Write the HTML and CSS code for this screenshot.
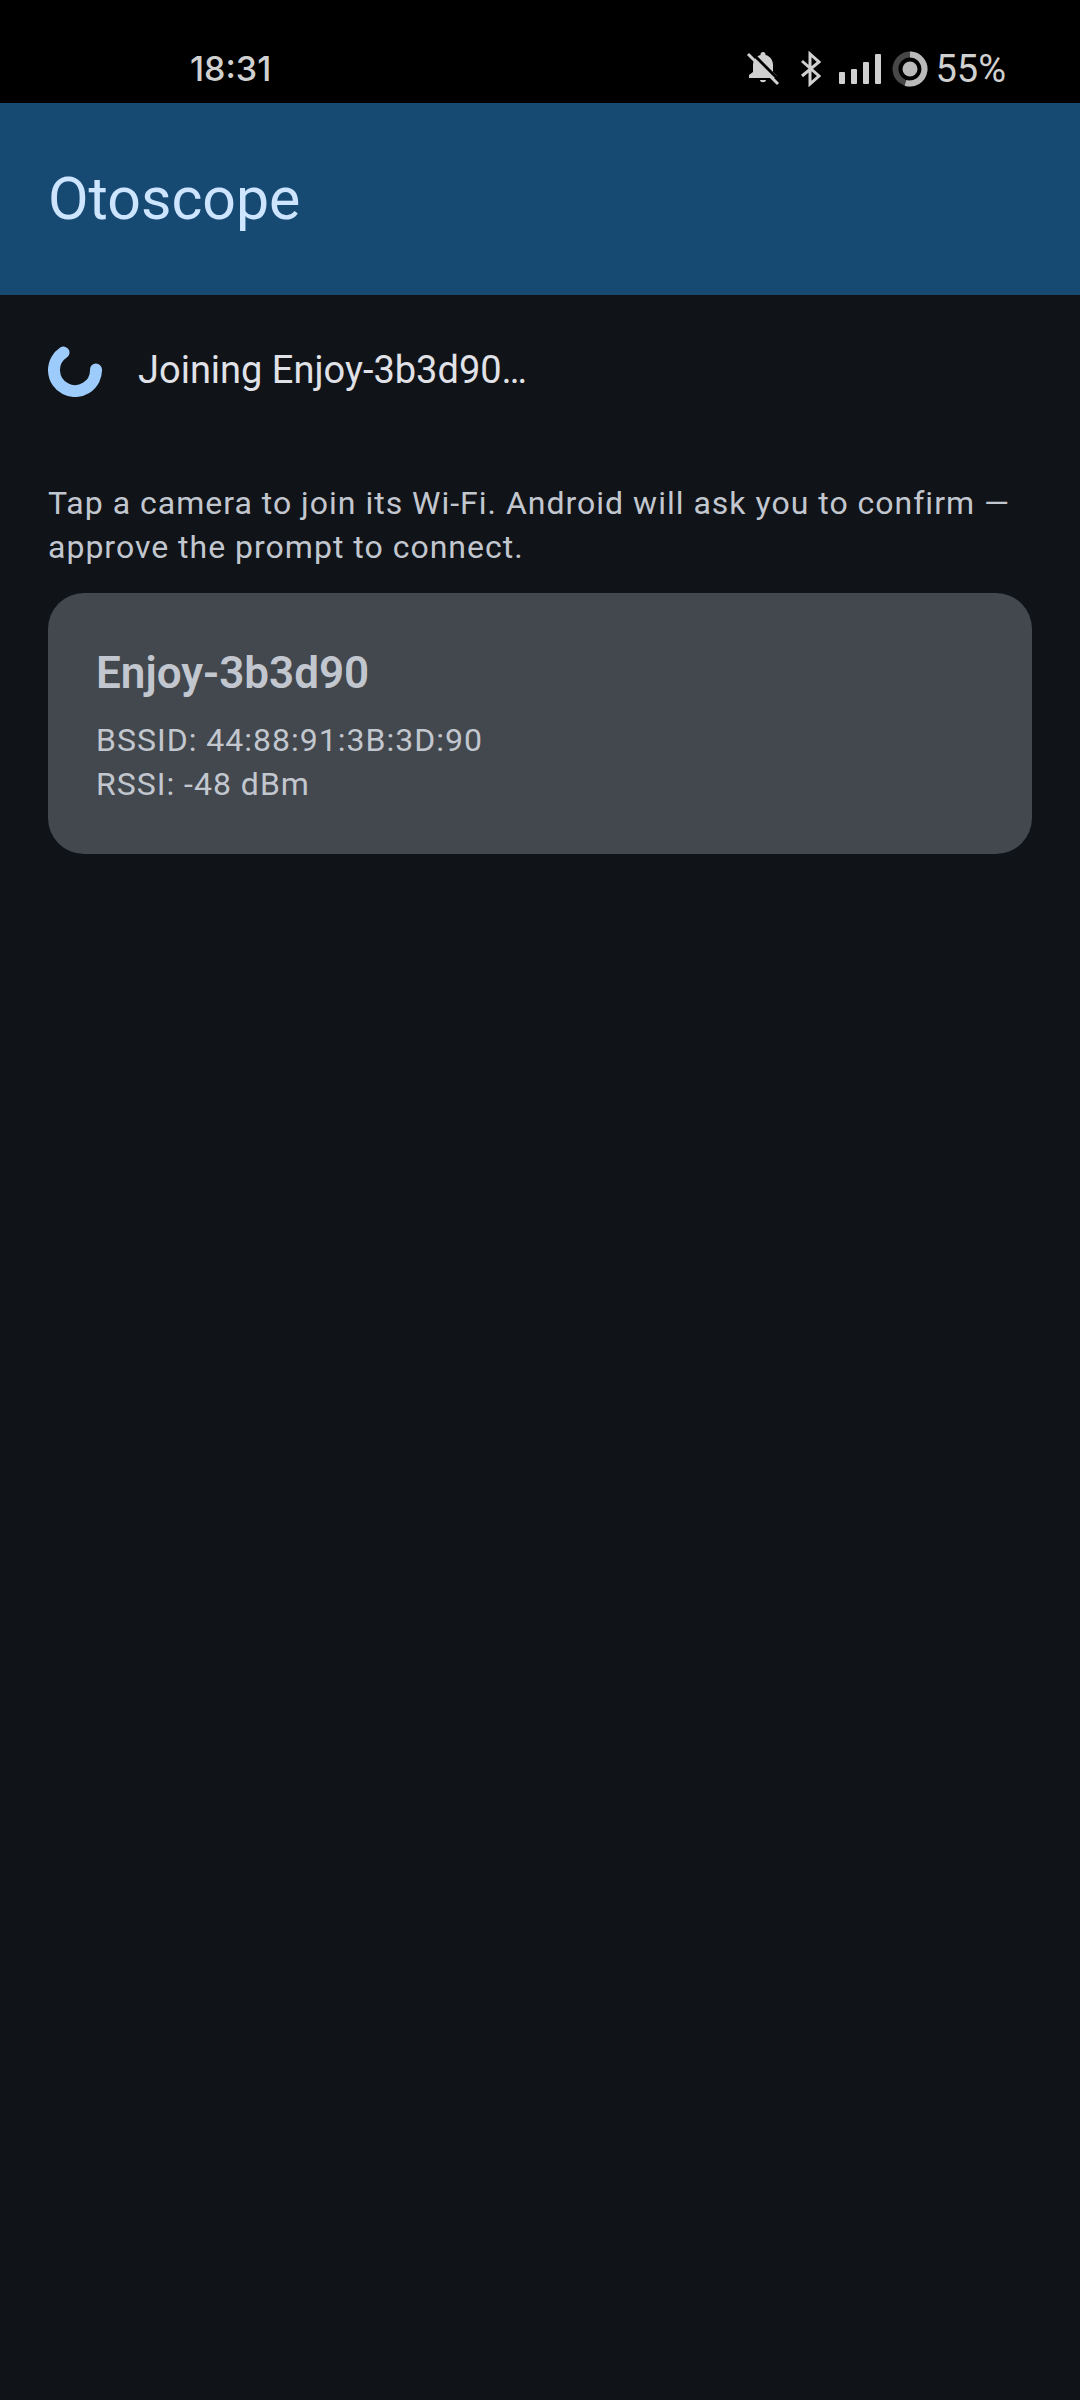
FILE: index.html
```html
<!DOCTYPE html>
<html lang="en">
<head>
  <meta charset="utf-8">
  <meta name="viewport" content="width=device-width, initial-scale=1">
  <title>Otoscope</title>
  <link rel="stylesheet" href="styles.css">
</head>
<body>
  <div class="status-bar">
    <time class="clock">18:31</time>
    <div class="status-icons">
      <svg class="bell" width="34" height="36" viewBox="0 0 34 36" role="img" aria-label="Muted">
        <path fill="#d0d0d0" d="M14.500 3.500a2.500 2.500 0 0 1 5 0v.5c5 1.200 7.500 5.500 7.500 10v7l4 4v2H3v-3l4-3v-7c0-2.500.8-5 2.500-7 1.300-1.500 3-2.500 5-3zM14 29h6c0 3-6 3-6 0z"/>
        <path stroke="#000" stroke-width="3" d="M5 1l30 30"/>
        <path stroke="#d0d0d0" stroke-width="3" d="M2 3l30 30"/>
      </svg>
      <svg class="bluetooth" width="22" height="36" viewBox="0 0 22 36" role="img" aria-label="Bluetooth">
        <path fill="none" stroke="#d0d0d0" stroke-width="3" d="M2 10l17 15-9 8V3l9 8L2 25"/>
      </svg>
      <svg class="signal" width="44" height="36" viewBox="0 0 44 36" role="img" aria-label="Signal">
        <g fill="#d0d0d0">
          <rect x="0" y="21" width="6" height="12" rx="1"/>
          <rect x="12" y="18" width="6" height="15" rx="1"/>
          <rect x="24" y="11" width="6" height="22" rx="1"/>
          <rect x="36" y="3" width="6" height="30" rx="1"/>
        </g>
      </svg>
      <svg class="battery" width="36" height="36" viewBox="0 0 36 36" role="img" aria-label="Battery">
        <circle cx="18" cy="18" r="14.500" fill="none" stroke="#474747" stroke-width="6"/>
        <path fill="none" stroke="#bababa" stroke-width="6" d="M18 3.500a14.500 14.500 0 1 1-4.500 28.300"/>
        <circle cx="18" cy="18" r="7.500" fill="#bababa"/>
      </svg>
      <span class="percent">55%</span>
    </div>
  </div>

  <header class="app-bar">
    <h1 class="app-title">Otoscope</h1>
  </header>

  <main class="content">
    <div class="progress" role="status">
      <svg width="54" height="54" viewBox="0 0 54 54" aria-hidden="true">
        <path fill="none" stroke="#9dcbfb" stroke-width="12" stroke-linecap="round" d="M15.500 9.500A21 21 0 1 0 48 26.500"/>
      </svg>
      <span>Joining Enjoy-3b3d90…</span>
    </div>
    <p class="hint">Tap a camera to join its Wi-Fi. Android will ask you to confirm — approve the prompt to connect.</p>
    <button class="camera" type="button">
      <span class="camera-name">Enjoy-3b3d90</span>
      <span class="camera-detail">BSSID: 44:88:91:3B:3D:90</span>
      <span class="camera-detail">RSSI: -48 dBm</span>
    </button>
  </main>
</body>
</html>
```
FILE: styles.css
```css
* {
  box-sizing: border-box;
}

body {
  margin: 0;
  min-height: 100vh;
  background: #101318;
  color: #e0e2e8;
  font-family: Roboto, "Noto Sans", sans-serif;
}

.status-bar {
  display: flex;
  align-items: flex-end;
  justify-content: space-between;
  height: 103px;
  padding: 0 74px 16px 190px;
  background: #000;
  color: #d0d0d0;
}

.clock {
  font-family: Inter, sans-serif;
  font-size: 34px;
  font-weight: 500;
  line-height: 36px;
}

.status-icons {
  display: flex;
  align-items: center;
}

.bluetooth {
  margin-left: 20px;
}

.signal {
  margin-left: 17px;
}

.battery {
  margin-left: 9px;
}

.percent {
  margin-left: 7px;
  font-size: 38px;
  line-height: 36px;
}

.app-bar {
  display: flex;
  align-items: center;
  height: 192px;
  padding: 0 48px;
  background: #164a73;
}

.app-title {
  margin: 0;
  color: #cee5ff;
  font-size: 59px;
  font-weight: 400;
  line-height: 76px;
}

.content {
  padding: 48px;
}

.progress {
  display: flex;
  align-items: center;
  gap: 36px;
  font-size: 38px;
  line-height: 54px;
}

.hint {
  margin: 84px 0 24px;
  color: #c2c7cf;
  font-size: 32px;
  letter-spacing: 1px;
  line-height: 44px;
}

.camera {
  display: flex;
  flex-direction: column;
  width: 100%;
  padding: 48px;
  border: 0;
  border-radius: 36px;
  background: #43474e;
  color: #c2c7cf;
  font-family: inherit;
  text-align: left;
}

.camera-name {
  margin-bottom: 12px;
  font-size: 44px;
  font-weight: 600;
  line-height: 65px;
}

.camera-detail {
  font-size: 32px;
  letter-spacing: 1px;
  line-height: 44px;
}
```
